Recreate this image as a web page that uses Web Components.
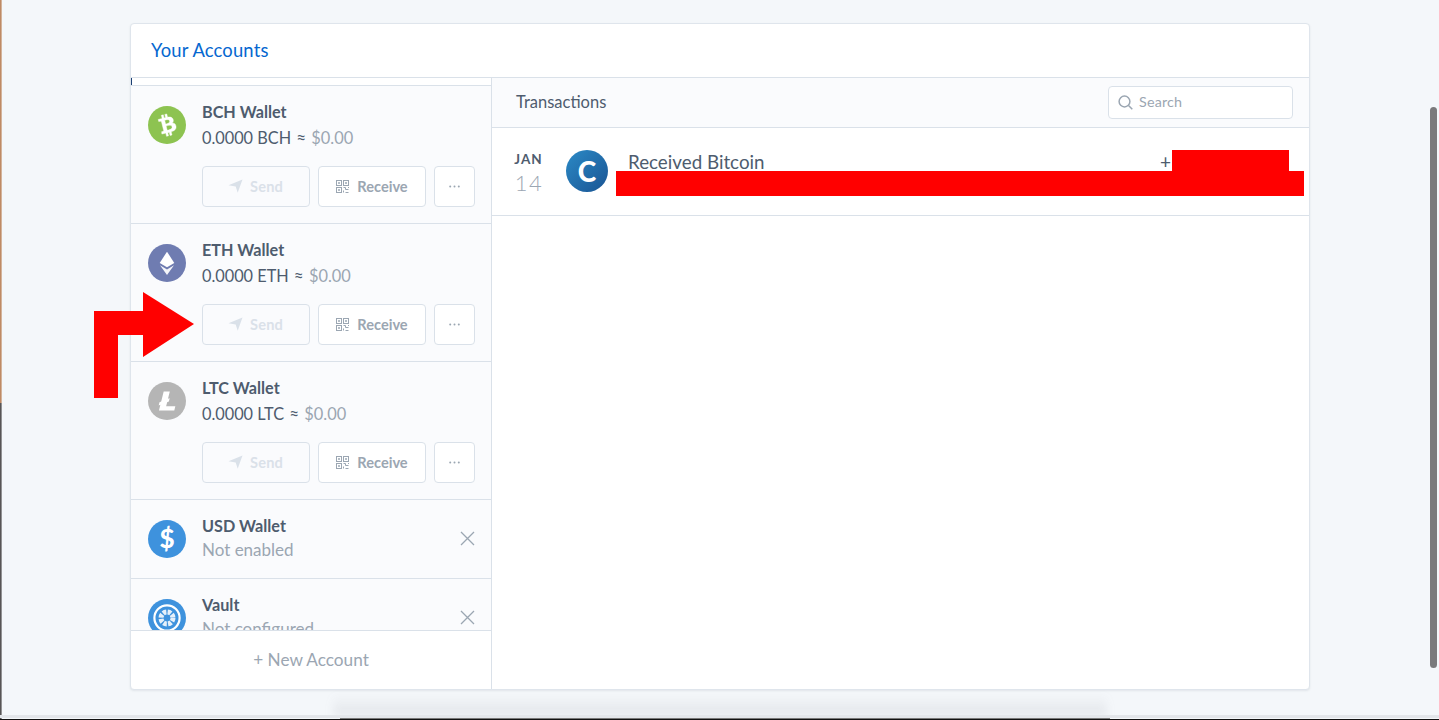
<!DOCTYPE html>
<html><head><meta charset="utf-8"><title>Your Accounts</title>
<style>
html,body{margin:0;height:720px;overflow:hidden;background:#f4f7fa;font-family:Lato,"Open Sans",sans-serif;color:#4e5c6e}
</style></head><body>
<acct-page>
  <acct-card>
    <span slot="title">Your Accounts</span>
    <wallet-row slot="list">
      <coin-badge slot="icon" type="bch"></coin-badge>
      <span slot="name">BCH Wallet</span>
      <amount-line code="BCH"></amount-line>
      <row-actions slot="foot"></row-actions>
    </wallet-row>
    <wallet-row slot="list">
      <coin-badge slot="icon" type="eth"></coin-badge>
      <span slot="name">ETH Wallet</span>
      <amount-line code="ETH"></amount-line>
      <row-actions slot="foot"></row-actions>
    </wallet-row>
    <wallet-row slot="list">
      <coin-badge slot="icon" type="ltc"></coin-badge>
      <span slot="name">LTC Wallet</span>
      <amount-line code="LTC"></amount-line>
      <row-actions slot="foot"></row-actions>
    </wallet-row>
    <wallet-row slot="list" closable muted>
      <coin-badge slot="icon" type="usd"></coin-badge>
      <span slot="name">USD Wallet</span>
      <span>Not enabled</span>
    </wallet-row>
    <wallet-row slot="list" closable muted>
      <coin-badge slot="icon" type="vault"></coin-badge>
      <span slot="name">Vault</span>
      <span>Not configured</span>
    </wallet-row>
    <span slot="foot">+ New Account</span>
    <tx-panel slot="main">
      <tx-row month="JAN" day="14" label="Received Bitcoin" sign="+"></tx-row>
    </tx-panel>
  </acct-card>
  <page-marks></page-marks>
</acct-page>
<script>
function def(name, css, html, setup){
  customElements.define(name, class extends HTMLElement{
    connectedCallback(){
      if(this.shadowRoot) return;
      const r=this.attachShadow({mode:'open'});
      r.innerHTML='<style>'+css+'</style>'+(typeof html==='function'?html(this):html);
      if(setup) setup(this,r);
    }
  });
}
def('acct-page',`:host{display:block;box-sizing:border-box;height:720px;padding:23px 129px 0 130px}`,`<slot></slot>`);

def('acct-card',`
:host{display:flex;flex-direction:column;box-sizing:border-box;height:667px;background:#fff;border:1px solid #dfe5ec;border-radius:4px;box-shadow:0 1px 2px rgba(90,105,125,.12);overflow:hidden}
header{box-sizing:border-box;height:54px;flex:none;display:flex;align-items:center;padding:0 20px 2px;color:#0667d0;font-size:18.4px;letter-spacing:.17px;border-bottom:1px solid #dae1e9}
.body{flex:1;display:flex;min-height:0}
.side{width:361px;flex:none;box-sizing:border-box;display:flex;flex-direction:column;border-right:1px solid #dae1e9}
.list{flex:1;min-height:0;overflow:hidden;height:552px}
.stub{height:7px;border-bottom:1px solid #dae1e9;position:relative}
.stub::before{content:"";position:absolute;left:0;top:0;width:1px;height:7px;background:#1b3f73}
.foot{box-sizing:border-box;height:59px;flex:none;display:flex;align-items:center;justify-content:center;padding-bottom:2px;border-top:1px solid #dae1e9;color:#9ba6b2;font-size:17.2px}
.main{flex:1;min-width:0;display:flex}
::slotted([slot=main]){flex:1}
`,`<header><slot name="title"></slot></header>
<div class="body"><div class="side"><div class="list"><div class="stub"></div><slot name="list"></slot></div><div class="foot"><slot name="foot"></slot></div></div><div class="main"><slot name="main"></slot></div></div>`);

def('wallet-row',`
:host{display:block;box-sizing:border-box;background:#fafbfd;border-bottom:1px solid #dae1e9;padding:20px 16px 16px 17px;height:138px}
:host([muted]){height:79px;padding:20px 16px 0 17px}
.top{display:flex;align-items:flex-start;gap:16px}
.txt{flex:1;min-width:0}
.name{font-size:16.2px;font-weight:700;line-height:14px;margin-top:-1px;color:#4e5c6e;height:20px}
.sub{font-size:16.3px;line-height:20px;margin-top:3px;color:#4e5c6e}
:host([muted]) .sub{color:#9ba6b2;font-size:17px;margin-top:1px;white-space:nowrap}
.foot{margin:18px 0 0 54px}
:host([muted]) .foot{display:none}
.x{display:none;flex:none;margin-top:11px}
:host([closable]) .x{display:block}
`,`<div class="top"><slot name="icon"></slot><div class="txt"><div class="name"><slot name="name"></slot></div><div class="sub"><slot></slot></div></div>
<svg class="x" width="15" height="15" viewBox="0 0 15 15" fill="none" stroke="#9ba6b2" stroke-width="1.3"><path d="M1 1l13 13M14 1L1 14"/></svg></div>
<div class="foot"><slot name="foot"></slot></div>`);

def('amount-line',`:host{white-space:nowrap}.a{font-size:17px;line-height:1;margin:0 1px}.u{color:#9ba6b2;font-size:16.4px}`,
 h=>`0.0000 ${h.getAttribute('code')} <span class="a">≈</span> <span class="u">$0.00</span>`);

def('coin-badge',`:host{display:block;flex:none;width:38px;height:38px}svg{display:block}`,h=>{
 const t=h.getAttribute('type');
 const btc='M23.189 14.02c.314-2.096-1.283-3.223-3.465-3.975l.708-2.84-1.728-.43-.69 2.765c-.454-.114-.92-.22-1.385-.326l.695-2.783L15.596 6l-.708 2.839c-.376-.086-.746-.17-1.104-.26l.002-.009-2.384-.595-.46 1.846s1.283.294 1.256.312c.7.175.826.638.805 1.006l-.806 3.235c.048.012.11.03.18.057l-.183-.045-1.13 4.532c-.086.212-.303.531-.793.41.018.025-1.256-.313-1.256-.313l-.858 1.978 2.25.561c.418.105.828.215 1.231.318l-.715 2.872 1.727.43.708-2.84c.472.127.93.245 1.378.357l-.706 2.828 1.728.43.715-2.866c2.948.558 5.164.333 6.097-2.333.752-2.146-.037-3.385-1.588-4.192 1.13-.26 1.98-1.003 2.207-2.538zm-3.95 5.538c-.533 2.147-4.148.986-5.32.695l.95-3.805c1.172.293 4.929.872 4.37 3.11zm.535-5.569c-.487 1.953-3.495.96-4.47.717l.86-3.45c.975.243 4.118.696 3.61 2.733z';
 const m={
  bch:`<circle cx="19" cy="19" r="19" fill="#8dc351"/><g transform="translate(19 19) rotate(-28) scale(1.12) translate(-16 -16)"><path fill="#fff" stroke="#fff" stroke-width=".35" d="${btc}"/></g>`,
  eth:`<circle cx="19" cy="19" r="19" fill="#6f7cb1"/><path fill="#fff" d="M19 7.7l-7.3 11.2 7.3 4.3 7.3-4.3z"/><path fill="#fff" d="M12 21.2l7 9.8 7-9.8-7 4.2z" opacity=".92"/>`,
  ltc:`<circle cx="19" cy="19" r="19" fill="#b5b5b5"/><g transform="translate(19 19) scale(1.19) translate(-16 -16)"><path fill="#fff" d="M10.427 19.214L9 19.768l.688-2.759 1.444-.58L13.213 8h5.129l-1.519 6.196 1.41-.571-.68 2.75-1.427.571-.848 3.483H23L22.127 24H9.252z"/></g>`,
  usd:`<circle cx="19" cy="19" r="19" fill="#3e92dd"/><text x="19" y="28" text-anchor="middle" font-family="Lato,sans-serif" font-weight="900" font-size="26" fill="#fff">$</text>`,
  vault:`<circle cx="19" cy="19" r="19" fill="#3e92dd"/><circle cx="19" cy="19" r="12.6" fill="none" stroke="#fff" stroke-width="2.2"/><circle cx="19" cy="19" r="6" fill="none" stroke="#e6f0fa" stroke-width="5" stroke-dasharray="3.4 1.3"/><circle cx="19" cy="19" r="2" fill="#3e92dd"/>`
 };
 return `<svg width="38" height="38" viewBox="0 0 38 38">${m[t]}</svg>`;
});

def('row-actions',`:host{display:flex;gap:8px}`,`<action-btn kind="send">Send</action-btn><action-btn kind="receive">Receive</action-btn><action-btn kind="more"></action-btn>`);

def('action-btn',`
:host{display:flex;box-sizing:border-box;height:41px;width:108px;align-items:center;justify-content:center;gap:8px;padding-bottom:1px;background:#fff;border:1px solid #dae1e9;border-radius:4px;font-size:14.6px;font-weight:700;color:#9ba6b2}
:host([kind=send]){background:transparent;color:#dae1e9;letter-spacing:.2px;gap:7px;padding-right:1px}
:host([kind=more]){width:41px}
svg{display:block;flex:none}
`,h=>{
 const k=h.getAttribute('kind');
 const ic={
  send:`<svg width="15" height="14" viewBox="0 0 14 14"><path fill="#dae1e9" d="M0 6.2L14 .5 9.2 13.8 7.2 7.4z"/></svg>`,
  receive:`<svg width="13" height="13" viewBox="0 0 13 13" fill="none" stroke="#9ba6b2" stroke-width="1"><rect x=".5" y=".5" width="5" height="5"/><rect x="7.5" y=".5" width="5" height="5"/><rect x=".5" y="7.5" width="5" height="5"/><path d="M2.5 2.5h1v1h-1zM9.5 2.5h1v1h-1zM2.5 9.5h1v1h-1zM7.5 7.5h2v2h3M12.5 7v1M7.5 10.5v2M9.5 12.5h3"/></svg>`,
  more:`<svg width="11" height="3" viewBox="0 0 11 3" fill="#9ba6b2"><circle cx="1.2" cy="1.5" r="1"/><circle cx="5.5" cy="1.5" r="1"/><circle cx="9.8" cy="1.5" r="1"/></svg>`
 };
 return ic[k]+'<slot></slot>';
});

def('search-box',`
:host{display:flex;box-sizing:border-box;width:185px;height:33px;align-items:center;gap:6px;padding:0 0 2px 9px;background:#fff;border:1px solid #dae1e9;border-radius:4px;color:#9ba6b2;font-size:14.3px;letter-spacing:.2px}
svg{display:block;flex:none;margin-top:2px}
`,`<svg width="15" height="15" viewBox="0 0 15 15" fill="none" stroke="#9ba6b2" stroke-width="1.5"><circle cx="6.5" cy="6.5" r="5.4"/><path d="M10.5 10.5l3.8 3.8"/></svg><span>Search</span>`);

def('tx-panel',`
:host{display:block}
.head{box-sizing:border-box;height:50px;display:flex;align-items:center;justify-content:space-between;padding:0 16px 0 24px;background:#fafbfd;border-bottom:1px solid #dae1e9;font-size:16.5px}
.head span{margin-bottom:2px}
`,`<div class="head"><span>Transactions</span><search-box></search-box></div><slot></slot>`);

def('tx-row',`
:host{display:flex;box-sizing:border-box;height:88px;padding:22px 0 0 22px;align-items:flex-start;border-bottom:1px solid #dae1e9}
.date{width:30px;text-align:center;flex:none}
.m{font-size:13.5px;font-weight:700;line-height:18px;letter-spacing:1px;white-space:nowrap;margin-left:-1px}
.d{font-size:22px;font-weight:300;line-height:30px;color:#9ba6b2;letter-spacing:1.5px}
.coin{flex:none;width:42px;height:42px;border-radius:50%;margin:0 20px 0 22px;background:linear-gradient(135deg,#2b8ac6,#1a5493);color:#fff;font-size:28px;font-weight:900;display:flex;align-items:center;justify-content:center;line-height:1}
.l{flex:1;font-size:18.8px;line-height:24px}
.s{font-size:19px;line-height:24px;margin-right:138px}
`,h=>`<div class="date"><div class="m">${h.getAttribute('month')}</div><div class="d">${h.getAttribute('day')}</div></div><div class="coin">C</div><div class="l">${h.getAttribute('label')}</div><div class="s">${h.getAttribute('sign')}</div>`);

def('page-marks',`
:host{position:absolute;inset:0;pointer-events:none;display:block;overflow:hidden}
.abs{position:absolute}
`,`
<div class="abs" style="left:0;top:0;width:2px;height:403px;background:linear-gradient(90deg,#b5764a,#c89a7280)"></div>
<div class="abs" style="left:0;top:403px;width:2px;height:317px;background:linear-gradient(90deg,#3b3838,#3b383860)"></div>
<div class="abs" style="left:1430px;top:107px;width:7px;height:561px;border-radius:4px;background:#7a7a7c"></div>
<div class="abs" style="left:333px;top:694px;width:774px;height:22px;background:linear-gradient(rgba(120,120,130,0),rgba(120,120,130,.13));filter:blur(4px)"></div>
<div class="abs" style="left:0;top:715px;width:1439px;height:3px;background:#e3e6ea"></div>
<div class="abs" style="left:0;top:719px;width:1439px;height:1px;background:#111"></div>
<div class="abs" style="left:340px;top:718px;width:770px;height:1px;background:#777"></div>
<div class="abs" style="left:1172px;top:150px;width:117px;height:21px;background:#f00"></div>
<div class="abs" style="left:616px;top:171px;width:688px;height:25px;background:#f00"></div>
<svg class="abs" style="left:0;top:0" width="220" height="420"><polygon fill="#f00" points="94,311 143,311 143,292 194,324 143,357 143,335 118,335 118,398 94,398"/></svg>
`);
</script>
</body></html>
